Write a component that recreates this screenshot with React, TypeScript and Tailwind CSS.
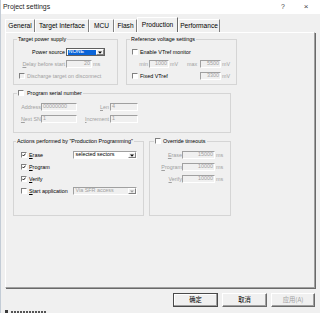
import React from "react";

type TabDef = { label: string; w: string; active?: boolean };

const tabs: TabDef[] = [
  { label: "General", w: "w-[30px]" },
  { label: "Target Interface", w: "w-[54px]" },
  { label: "MCU", w: "w-[25px]" },
  { label: "Flash", w: "w-[23px]" },
  { label: "Production", w: "w-[41px]", active: true },
  { label: "Performance", w: "w-[42px]" },
];

const dim = "text-[#a0a0a0]";

function Check({ checked = false, disabled = false }: { checked?: boolean; disabled?: boolean }) {
  return (
    <span
      className={`flex-none w-[6px] h-[6px] border border-t-[#808080] border-l-[#808080] border-b-white border-r-white flex items-center justify-center ${
        disabled ? "bg-[#f0f0f0]" : "bg-white"
      }`}
    >
      {checked && (
        <svg width="4" height="4" viewBox="0 0 4 4">
          <path d="M0.4 1.8 L1.5 3 L3.6 0.6" fill="none" stroke="#000" strokeWidth="0.9" />
        </svg>
      )}
    </span>
  );
}

// sunken edit box, greyed out like in the dialog
function Field({ w, value, left = false }: { w: string; value: string; left?: boolean }) {
  return (
    <span
      className={`${w} h-[8px] flex-none flex items-center leading-none px-[1px] border border-t-[#a0a0a0] border-l-[#a0a0a0] border-b-white border-r-white bg-[#f0f0f0] ${dim} ${
        left ? "justify-start" : "justify-end"
      }`}
    >
      {value}
    </span>
  );
}

function Combo({ w, text, selected = false, disabled = false }: { w: string; text: string; selected?: boolean; disabled?: boolean }) {
  return (
    <span
      className={`${w} h-[8px] flex-none flex leading-none border ${
        selected ? "border-[#5f5f5f]" : "border-t-[#a0a0a0] border-l-[#a0a0a0] border-b-white border-r-white"
      } ${disabled ? `bg-[#f0f0f0] ${dim}` : "bg-white"}`}
    >
      <span className="flex-1 flex items-center p-[0.5px]">
        <span className={`h-full flex items-center px-[1px] ${selected ? "w-[28px] bg-[#0a64d8] text-white" : ""}`}>{text}</span>
      </span>
      <span className="w-[8px] flex items-center justify-center bg-[#f0f0f0] border border-t-white border-l-white border-r-[#808080] border-b-[#808080]">
        <svg width="4" height="3" viewBox="0 0 4 3">
          <path d="M0 0.4 H4 L2 2.8 Z" fill={disabled ? "#a0a0a0" : "#000"} />
        </svg>
      </span>
    </span>
  );
}

function Group({ w, h, legend, children }: { w: string; h: string; legend: React.ReactNode; children: React.ReactNode }) {
  return (
    <fieldset className={`${w} ${h} flex-none border border-[#d5d5d5] m-0 p-0 min-w-0`}>
      {legend}
      {children}
    </fieldset>
  );
}

export default function App() {
  return (
    <div className="w-[320px] h-[313px] bg-[#f0f0f0] flex flex-col overflow-hidden text-black font-['Liberation_Sans',Arial,sans-serif] text-[5.4px] leading-[8px] border-l border-[#c3ccd6]">
      {/* title bar */}
      <div className="h-[14px] flex-none bg-white flex items-center pl-[2px] text-[6.9px] text-[#1b1b1b]">
        <span>Project settings</span>
        <span className="ml-auto w-[8px] text-center text-[#444]">?</span>
        <span className="ml-[15px] mr-[10px] w-[8px] text-center text-[8px] text-[#444]">×</span>
      </div>

      {/* tabs */}
      <div className="h-[18px] flex-none flex items-end pl-[4px] text-[6.6px]">
        {tabs.map((t) => (
          <div
            key={t.label}
            className={`${t.w} flex items-center justify-center border-t border-l border-t-white border-l-white border-r ${
              t.active ? "h-[15px] border-r-[#696969] pb-[1px]" : "h-[13px] border-r-[#808080]"
            }`}
          >
            {t.label}
          </div>
        ))}
      </div>

      {/* tab page */}
      <div className="ml-[4px] w-[310px] h-[256px] flex-none border border-t-white border-l-white border-r-[#a0a0a0] border-b-[#a0a0a0] shadow-[1px_1px_0_#696969] pl-[7px] pt-[2px] flex flex-col gap-[4px]">
        <div className="flex gap-[8px]">
          <Group
            w="w-[105px]"
            h="h-[50px]"
            legend={<legend className="ml-[3px] px-[1px] h-[8px] leading-[8px]">Target power supply</legend>}
          >
            <div className="pt-[3px] flex flex-col">
              <div className="h-[12px] flex items-center">
                <span className="w-[51px] text-right">Power source</span>
                <span className="ml-[1px] flex">
                  <Combo w="w-[39px]" text="NONE" selected />
                </span>
              </div>
              <div className="h-[12px] flex items-center">
                <span className={`w-[51px] text-right ${dim}`}>
                  <span className="underline">D</span>elay before start
                </span>
                <span className="ml-[1px] flex">
                  <Field w="w-[26px]" value="20" />
                </span>
                <span className={`ml-[1px] ${dim}`}>ms</span>
              </div>
              <div className="h-[12px] flex items-center pl-[5px]">
                <Check disabled />
                <span className={`ml-[2px] ${dim}`}>Discharge target on disconnect</span>
              </div>
            </div>
          </Group>

          <Group
            w="w-[111px]"
            h="h-[50px]"
            legend={<legend className="ml-[3px] px-[1px] h-[8px] leading-[8px]">Reference voltage settings</legend>}
          >
            <div className="pt-[3px] flex flex-col">
              <div className="h-[12px] flex items-center pl-[5px]">
                <Check />
                <span className="ml-[2px]">Enable VTref monitor</span>
              </div>
              <div className={`h-[12px] flex items-center pl-[10px] ${dim}`}>
                <span className="w-[11px] text-right">min</span>
                <span className="ml-[1px] flex">
                  <Field w="w-[20px]" value="1000" />
                </span>
                <span className="ml-[1px] w-[8px]">mV</span>
                <span className="ml-[9px] w-[10px] text-right">max</span>
                <span className="ml-[3px] flex">
                  <Field w="w-[21px]" value="5500" />
                </span>
                <span className="ml-[1px]">mV</span>
              </div>
              <div className="h-[12px] flex items-center pl-[5px]">
                <Check />
                <span className="ml-[2px] w-[60px]">Fixed VTref</span>
                <Field w="w-[21px]" value="3300" />
                <span className={`ml-[1px] ${dim}`}>mV</span>
              </div>
            </div>
          </Group>
        </div>

        <Group
          w="w-[218px]"
          h="h-[44px]"
          legend={
            <legend className="ml-[3px] px-[1px] h-[8px] leading-[8px]">
              <span className="flex items-center gap-[3px]">
                <Check />
                <span>Program serial number</span>
              </span>
            </legend>
          }
        >
          <div className={`pt-[4px] flex flex-col ${dim}`}>
            <div className="h-[12px] flex items-center">
              <span className="w-[27px] text-right">Address</span>
              <Field w="w-[36px]" value="00000000" left />
              <span className="w-[32px] text-right">
                <span className="underline">L</span>en
              </span>
              <span className="ml-[1px] flex">
                <Field w="w-[28px]" value="4" left />
              </span>
            </div>
            <div className="h-[12px] flex items-center">
              <span className="w-[27px] text-right">
                <span className="underline">N</span>ext SN
              </span>
              <Field w="w-[36px]" value="1" left />
              <span className="w-[32px] text-right">
                <span className="underline">I</span>ncrement
              </span>
              <span className="ml-[1px] flex">
                <Field w="w-[28px]" value="1" left />
              </span>
            </div>
          </div>
        </Group>

        <div className="flex gap-[5px]">
          <Group
            w="w-[131px]"
            h="h-[79px]"
            legend={
              <legend className="ml-[2px] px-[1px] h-[8px] leading-[8px]">
                Actions performed by "Production Programming"
              </legend>
            }
          >
            <div className="pt-[4px] flex flex-col">
              <div className="h-[12px] flex items-center pl-[7px]">
                <Check checked />
                <span className="ml-[2px] w-[44px]">
                  <span className="underline">E</span>rase
                </span>
                <Combo w="w-[64px]" text="selected sectors" />
              </div>
              <div className="h-[12px] flex items-center pl-[7px]">
                <Check checked />
                <span className="ml-[2px]">
                  <span className="underline">P</span>rogram
                </span>
              </div>
              <div className="h-[12px] flex items-center pl-[7px]">
                <Check checked />
                <span className="ml-[2px]">
                  <span className="underline">V</span>erify
                </span>
              </div>
              <div className="h-[12px] flex items-center pl-[7px]">
                <Check />
                <span className="ml-[2px] w-[44px]">
                  <span className="underline">S</span>tart application
                </span>
                <Combo w="w-[64px]" text="Via SFR access" disabled />
              </div>
            </div>
          </Group>

          <Group
            w="w-[82px]"
            h="h-[79px]"
            legend={
              <legend className="ml-[4px] px-[1px] h-[8px] leading-[8px]">
                <span className="flex items-center gap-[2px]">
                  <Check />
                  <span>Override timeouts</span>
                </span>
              </legend>
            }
          >
            <div className={`pt-[4px] flex flex-col ${dim}`}>
              {[
                ["E", "rase", "15000"],
                ["P", "rogram", "10000"],
                ["V", "erify", "10000"],
              ].map(([k, rest, v]) => (
                <div key={k + rest} className="h-[12px] flex items-center">
                  <span className="w-[32px] text-right">
                    <span className="underline">{k}</span>
                    {rest}
                  </span>
                  <Field w="w-[33px]" value={v} />
                  <span className="ml-[1px]">ms</span>
                </div>
              ))}
            </div>
          </Group>
        </div>
      </div>

      {/* dialog buttons */}
      <div className="flex-none flex justify-end gap-[4px] pr-[5px] pt-[5px] text-[6.3px] font-['Noto_Sans_CJK_SC','Noto_Sans',sans-serif]">
        <button className="w-[45px] h-[14px] flex items-center justify-center leading-none border border-[#4a4a4a] bg-[#f0f0f0] shadow-[inset_-1px_-1px_0_#a0a0a0,inset_1px_1px_0_#fff]">
          确定
        </button>
        <button className="w-[45px] h-[14px] flex items-center justify-center leading-none border border-t-white border-l-white border-r-[#696969] border-b-[#696969] bg-[#f0f0f0] shadow-[inset_-1px_-1px_0_#a0a0a0]">
          取消
        </button>
        <button className="w-[44px] h-[14px] flex items-center justify-center leading-none border border-t-white border-l-white border-r-[#696969] border-b-[#696969] bg-[#f0f0f0] shadow-[inset_-1px_-1px_0_#a0a0a0] text-[#a0a0a0]">
          应用(A)
        </button>
      </div>

      {/* edge of the window below */}
      <div className="mt-auto h-[3px] flex-none flex items-end gap-[1px] pl-[4px]">
        <span className="w-[3px] h-[3px] bg-[#3a3a3a]" />
        <span className="ml-[2px] w-[36px] h-[2px] bg-[repeating-linear-gradient(90deg,#555_0_2px,transparent_2px_3px)]" />
      </div>
    </div>
  );
}
